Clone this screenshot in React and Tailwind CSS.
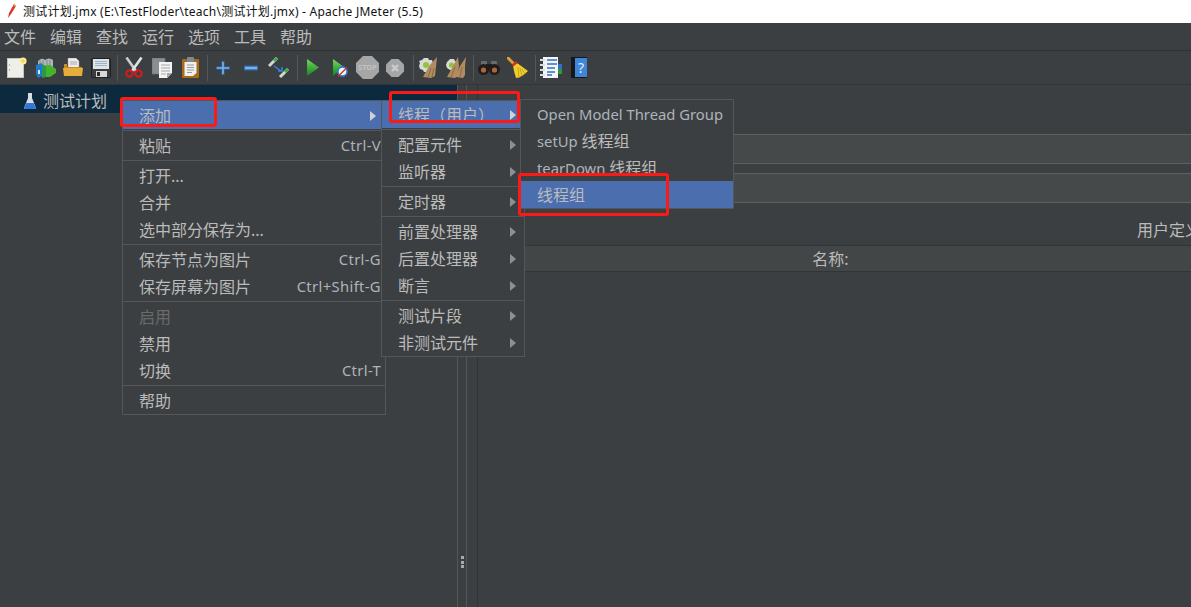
// JMeter window with the add > thread > thread group context menu open
const MENUS = ['文件', '编辑', '查找', '运行', '选项', '工具', '帮助'];

function Arrow({ light }) {
  return (
    <svg width="6" height="10" viewBox="0 0 6 10" className="shrink-0">
      <path d="M0 0 L6 5 L0 10 Z" fill={light ? '#cfd3d8' : '#8d9093'} />
    </svg>
  );
}

function Sep() {
  return (
    <div className="py-px">
      <div className="h-px bg-[#555657]" />
    </div>
  );
}

function Latin({ children }) {
  return <span className="text-[14.8px] text-[#adb4ba]">{children}</span>;
}

function Shortcut({ children }) {
  return <span className="text-[14.8px] tracking-[0.35px] text-[#adb4ba]">{children}</span>;
}

function Item({ label, shortcut, arrow, active, disabled, h = 'h-[27px]', pad = 'pr-[4px]' }) {
  return (
    <div className={`flex items-center justify-between pl-[16px] ${h} ${pad} ${active ? 'bg-[#4b6eaf]' : ''}`}>
      <span className={disabled ? 'text-[#6a6a6a]' : 'text-[#bbbbbb]'}>{label}</span>
      {shortcut && <Shortcut>{shortcut}</Shortcut>}
      {arrow && <Arrow light={active} />}
    </div>
  );
}

function ToolSep({ gap = 'ml-[4px] mr-[1px]' }) {
  return <div className={`h-[26px] w-px bg-[#555657] ${gap}`} />;
}

function Tool({ children, w = 'w-[28px]' }) {
  return <div className={`flex justify-center ${w}`}>{children}</div>;
}

function NewIcon() {
  return (
    <svg width="20" height="21" viewBox="0 0 20 21">
      <rect x="0.5" y="1.5" width="16" height="19" fill="#efefe9" stroke="#c4c4bc" />
      <circle cx="2.5" cy="8" r="0.7" fill="#9a9a94" />
      <circle cx="2.5" cy="13" r="0.7" fill="#9a9a94" />
      <circle cx="16" cy="4" r="3.6" fill="#f7efa0" />
      <circle cx="16" cy="4" r="1.8" fill="#f2d84a" />
    </svg>
  );
}
function TemplateIcon() {
  return (
    <svg width="21" height="22" viewBox="0 0 21 22">
      <path d="M3 4 Q7 0 10 3 Q14 0 18 3 L18 10 L3 10 Z" fill="#aeb6b9" />
      <path d="M5 3 V9 M8 3 V9 M12 3 V9 M15 3 V9" stroke="#808a8d" />
      <path d="M1 8 L7 6 V19 L3 21 L1 17 Z" fill="#1f78c8" />
      <path d="M7 7 L11 9 V20 L7 21 Z" fill="#2a9a48" />
      <path d="M11 8 H15 L21 12 V16 L15 20 H11 Z" fill="#45b32c" />
      <rect x="3" y="13" width="2" height="4" fill="#d5e6f5" />
    </svg>
  );
}
function OpenIcon() {
  return (
    <svg width="20" height="19" viewBox="0 0 20 19">
      <path d="M5 0 H13 L16 3 V10 H5 Z" fill="#ececec" stroke="#9a9a9a" strokeWidth="0.5" />
      <path d="M7 4 H14 M7 6 H14" stroke="#a8a8a8" />
      <path d="M1 6 H4 V9 H19 V17 Q19 18 18 18 H2 Q1 18 1 17 Z" fill="#c88d1e" />
      <path d="M0 10 H20 L19 18 H1 Z" fill="#e6ad3a" />
    </svg>
  );
}
function SaveIcon() {
  return (
    <svg width="20" height="20" viewBox="0 0 20 20">
      <rect x="0.5" y="0.5" width="19" height="19" rx="1" fill="#3a3d40" stroke="#1f2021" />
      <rect x="2" y="1" width="16" height="10" fill="#dde4ea" />
      <path d="M4 3.5 H16 M4 5.5 H16 M4 7.5 H16" stroke="#9db4c8" />
      <rect x="5" y="13" width="11" height="6" fill="#d8d8d8" />
      <rect x="6" y="14" width="3" height="4" fill="#2a2a2a" />
    </svg>
  );
}
function CutIcon() {
  return (
    <svg width="18" height="21" viewBox="0 0 18 21">
      <path d="M1.5 0.5 L11 14" stroke="#c8cdd0" strokeWidth="2.6" />
      <path d="M16.5 0.5 L7 14" stroke="#e0e3e5" strokeWidth="2.6" />
      <circle cx="4.5" cy="16.5" r="3.2" fill="none" stroke="#d01c1c" strokeWidth="2.2" />
      <circle cx="13.5" cy="16.5" r="3.2" fill="none" stroke="#d01c1c" strokeWidth="2.2" />
    </svg>
  );
}
function CopyIcon() {
  return (
    <svg width="21" height="20" viewBox="0 0 21 20">
      <rect x="0" y="0" width="13" height="16" fill="#8b8d8e" stroke="#6e7071" strokeWidth="0.6" />
      <path d="M7 4 H20 V15 L15 20 H7 Z" fill="#f3f3f3" />
      <path d="M20 15 H15 V20 Z" fill="#a9a9a9" />
      <path d="M9 7 H18 M9 10 H18 M9 13 H18 M9 16 H14" stroke="#a6a6a6" />
    </svg>
  );
}
function PasteIcon() {
  return (
    <svg width="17" height="21" viewBox="0 0 17 21">
      <rect x="0" y="2" width="17" height="19" rx="1" fill="#a8691a" />
      <path d="M2.5 5 H14.5 V16 L11 19 H2.5 Z" fill="#f0f0ee" />
      <rect x="5" y="0" width="7" height="5" rx="1" fill="#85888a" />
      <path d="M5 8 H12 M5 10.5 H12 M5 13 H12 M5 15.5 H10" stroke="#9b9b9b" />
    </svg>
  );
}
function PlusIcon() {
  return (
    <svg width="14" height="14" viewBox="0 0 14 14">
      <path d="M0 7 H14 M7 0 V14" stroke="#2f6bb0" strokeWidth="3" />
      <path d="M1 7 H13 M7 1 V13" stroke="#79b2ea" strokeWidth="1.6" />
    </svg>
  );
}
function MinusIcon() {
  return (
    <svg width="14" height="6" viewBox="0 0 14 6">
      <path d="M0 3 H14" stroke="#2f6bb0" strokeWidth="5" />
      <path d="M1 3 H13" stroke="#79b2ea" strokeWidth="2.4" />
    </svg>
  );
}
function ToggleIcon() {
  return (
    <svg width="22" height="21" viewBox="0 0 22 21">
      <path d="M1 9 L9 1" stroke="#d5d8d0" strokeWidth="3" />
      <path d="M6 4 L9 1" stroke="#3fae4a" strokeWidth="3" />
      <path d="M12 20 L20 12" stroke="#d5d8d0" strokeWidth="3" />
      <path d="M17 15 L20 12" stroke="#3fae4a" strokeWidth="3" />
      <path d="M6 9 L13 14 M10 14 H14 V10" stroke="#2f86e0" strokeWidth="1.5" fill="none" />
    </svg>
  );
}
function PlayIcon() {
  return (
    <svg width="12" height="17" viewBox="0 0 12 17">
      <defs>
        <linearGradient id="play" x1="0" y1="0" x2="0" y2="1">
          <stop offset="0" stopColor="#7ad35e" />
          <stop offset="1" stopColor="#0b8a1c" />
        </linearGradient>
      </defs>
      <path d="M0 0 L12 8.5 L0 17 Z" fill="url(#play)" />
    </svg>
  );
}
function PlayNoTimerIcon() {
  return (
    <svg width="15" height="18" viewBox="0 0 15 18">
      <path d="M0 0 L11 8 L0 17 Z" fill="url(#play)" />
      <circle cx="9.5" cy="12.5" r="4.6" fill="#f2f2f2" stroke="#2f78d0" strokeWidth="1.6" />
      <path d="M5 17.5 L14 8.5" stroke="#d62a2a" strokeWidth="1.3" />
    </svg>
  );
}
function StopIcon() {
  return (
    <svg width="23" height="23" viewBox="0 0 23 23">
      <path d="M7 0 H16 L23 7 V16 L16 23 H7 L0 16 V7 Z" fill="#a6a6a6" />
      <text x="11.5" y="14" textAnchor="middle" fontSize="7.5" fontWeight="700" fill="#c2c2c2">STOP</text>
    </svg>
  );
}
function ShutdownIcon() {
  return (
    <svg width="18" height="18" viewBox="0 0 18 18">
      <path d="M5.5 0 H12.5 L18 5.5 V12.5 L12.5 18 H5.5 L0 12.5 V5.5 Z" fill="#a6a6a6" />
      <path d="M6 6 L12 12 M12 6 L6 12" stroke="#cdcdcd" strokeWidth="2.4" />
    </svg>
  );
}
function ClearIcon() {
  return (
    <svg width="19" height="21" viewBox="0 0 19 21">
      <path d="M5 1 H9 L10 3 L13 3 L14 6 L13 8 L14 11 L11 13 L9 15 H5 L4 13 L1 12 L0 9 L1 6 L0 4 L3 3 Z" fill="#d9d9d6" />
      <circle cx="7" cy="8" r="3" fill="#8fc43c" />
      <path d="M18 0 L10 9 L4 20 L12 21 L16 19 L17 10 Z" fill="#b18c60" />
      <path d="M9 20 L12 11 M13 20 L15 11" stroke="#8a6a44" />
    </svg>
  );
}
function ClearAllIcon() {
  return (
    <svg width="20" height="21" viewBox="0 0 20 21">
      <path d="M4 2 H8 L9 4 L11 5 L10 8 L11 11 L8 13 H4 L1 11 L0 8 L1 5 Z" fill="#d9d9d6" />
      <circle cx="5.5" cy="8" r="2.6" fill="#8fc43c" />
      <path d="M12 0 L7 9 L1 20 L9 21 L12 19 L13 9 Z" fill="#b18c60" />
      <path d="M20 0 L14 9 L10 20 L17 21 L19 18 L19 9 Z" fill="#b18c60" />
      <path d="M5 20 L9 10 M14 20 L16 10" stroke="#8a6a44" />
    </svg>
  );
}
function BinocularsIcon() {
  return (
    <svg width="22" height="14" viewBox="0 0 22 14">
      <rect x="3" y="0" width="6" height="6" rx="1" fill="#6b6b6b" />
      <rect x="13" y="0" width="6" height="6" rx="1" fill="#6b6b6b" />
      <rect x="8" y="3" width="6" height="4" fill="#1d1d1d" />
      <circle cx="5.5" cy="8.5" r="5.5" fill="#201c1a" />
      <circle cx="16.5" cy="8.5" r="5.5" fill="#201c1a" />
      <circle cx="5.5" cy="9" r="2.6" fill="#a9683a" />
      <circle cx="16.5" cy="9" r="2.6" fill="#a9683a" />
    </svg>
  );
}
function BroomIcon() {
  return (
    <svg width="21" height="21" viewBox="0 0 21 21">
      <path d="M1 1 L7 7" stroke="#d9a035" strokeWidth="3" strokeLinecap="round" />
      <path d="M6 9 L10 6 L21 14 Q14 21 9 21 Q7 15 6 9 Z" fill="#efce2c" />
      <path d="M12 21 L11 10 M15 19 L13 11 M18 17 L15 12" stroke="#c9a31c" />
      <path d="M5.5 8.5 L10 5" stroke="#d32a2a" strokeWidth="2.4" />
    </svg>
  );
}
function TreeIcon() {
  return (
    <svg width="22" height="21" viewBox="0 0 22 21">
      <rect x="3" y="0" width="15" height="21" fill="#f5f5f5" />
      <path d="M7 3 H17 M7 7 H17 M7 11 H15 M7 15 H15 M7 18 H12" stroke="#2f6fd0" strokeWidth="1.3" />
      <path d="M0 3 H5 M0 8 H5 M0 13 H5 M0 18 H5" stroke="#dcdcdc" strokeWidth="2" />
      <rect x="18" y="7" width="4" height="5" fill="#2f6fd0" />
      <rect x="18" y="12" width="4" height="5" fill="#2e9a36" />
    </svg>
  );
}
function HelpIcon() {
  return (
    <svg width="16" height="21" viewBox="0 0 16 21">
      <rect x="0" y="0" width="16" height="21" fill="#14181c" />
      <rect x="4" y="1" width="12" height="19" fill="#3f86d8" />
      <text x="10" y="16" textAnchor="middle" fontSize="14" fill="#e4eefa">?</text>
    </svg>
  );
}

function Flask() {
  return (
    <svg width="14" height="18" viewBox="0 0 14 18">
      <path d="M5 1 H9 V6 L13 16 Q13 17 12 17 H2 Q1 17 1 16 L5 6 Z" fill="#d8dde2" />
      <path d="M3.4 11 H10.6 L13 16 Q13 17 12 17 H2 Q1 17 1 16 Z" fill="#2f78d8" />
    </svg>
  );
}

function RedBox({ className }) {
  return <div className={`absolute rounded-[3px] border-[3px] border-[#fb1a16] ${className}`} />;
}

export default function App() {
  return (
    <div className="relative flex h-[607px] w-[1191px] flex-col overflow-hidden bg-[#3c3f41] font-['Noto_Sans','Noto_Sans_CJK_SC',sans-serif] text-[16px] leading-none text-[#bbbbbb]">
      {/* title bar */}
      <div className="flex h-[23px] items-center bg-white pl-[6px] text-[12px] tracking-[0.23px] text-[#111111]">
        <svg width="10" height="15" viewBox="0 0 10 15" className="mr-[7px]">
          <path d="M8 0 L3 9 L2 14 L5 10 L10 2 Z" fill="#d8342c" />
          <path d="M8 0 L10 2 L9 3 L7 1 Z" fill="#e9a23a" />
        </svg>
        测试计划.jmx (E:\TestFloder\teach\测试计划.jmx) - Apache JMeter (5.5)
      </div>

      {/* menu bar */}
      <div className="flex h-[28px] items-center gap-[14px] border-b border-[#2f3234] pl-[4px] pt-[1px]">
        {MENUS.map((m) => (
          <span key={m}>{m}</span>
        ))}
      </div>

      {/* toolbar */}
      <div className="flex h-[34px] items-center border-b border-[#323537] pl-[3px]">
        <Tool><NewIcon /></Tool>
        <Tool><TemplateIcon /></Tool>
        <Tool><OpenIcon /></Tool>
        <Tool><SaveIcon /></Tool>
        <ToolSep gap="ml-[2px] mr-[2px]" />
        <Tool><CutIcon /></Tool>
        <Tool><CopyIcon /></Tool>
        <Tool><PasteIcon /></Tool>
        <ToolSep gap="ml-[3px] mr-[1px]" />
        <Tool><PlusIcon /></Tool>
        <Tool><MinusIcon /></Tool>
        <Tool><ToggleIcon /></Tool>
        <ToolSep />
        <Tool w="w-[27.5px]"><PlayIcon /></Tool>
        <Tool w="w-[27.5px]"><PlayNoTimerIcon /></Tool>
        <Tool w="w-[27.5px]"><StopIcon /></Tool>
        <Tool w="w-[27.5px]"><ShutdownIcon /></Tool>
        <ToolSep />
        <Tool w="w-[27px]"><ClearIcon /></Tool>
        <Tool w="w-[27px]"><ClearAllIcon /></Tool>
        <ToolSep />
        <Tool><BinocularsIcon /></Tool>
        <Tool><BroomIcon /></Tool>
        <ToolSep />
        <Tool><TreeIcon /></Tool>
        <Tool><HelpIcon /></Tool>
      </div>

      {/* body */}
      <div className="flex min-h-0 flex-1">
        <div className="w-[458px] border-r border-[#555657]">
          <div className="flex h-[28px] items-center gap-[6px] bg-[#0d293e] pl-[23px] pt-[4px]">
            <Flask />
            <span>测试计划</span>
          </div>
        </div>
        <div className="relative w-[9px] border-r border-[#555657]">
          <div className="absolute left-[3px] top-[471px] flex flex-col gap-[1.5px]">
            <div className="size-[3px] bg-[#a8a8a8]" />
            <div className="size-[3px] bg-[#a8a8a8]" />
            <div className="size-[3px] bg-[#a8a8a8]" />
          </div>
        </div>
        <div className="w-[11px] border-r border-[#323537]" />
        <div className="min-w-0 flex-1 overflow-hidden pt-[49px]">
          <div className="h-[30px] border-y border-[#5e6060] bg-[#45494a]" />
          <div className="mt-[9px] h-[30px] border-y border-[#5e6060] bg-[#45494a]" />
          <div className="flex h-[42px] items-end whitespace-nowrap pb-[7px] pl-[659px]">用户定义的变量</div>
          <div className="flex h-[27px] items-center justify-center border-y border-[#323537] bg-[#434647] pr-[8px]">
            名称:
          </div>
        </div>
      </div>

      {/* context menu */}
      <div className="absolute left-[122px] top-[100px] w-[264px] border border-[#555657] bg-[#3c3f41]">
        <Item label="添加" arrow active h="h-[28px]" pad="pr-[9px] pt-[1px]" />
        <Sep />
        <Item label="粘贴" shortcut="Ctrl-V" />
        <Sep />
        <Item label="打开..." />
        <Item label="合并" />
        <Item label="选中部分保存为..." />
        <Sep />
        <Item label="保存节点为图片" shortcut="Ctrl-G" />
        <Item label="保存屏幕为图片" shortcut="Ctrl+Shift-G" />
        <Sep />
        <Item label="启用" disabled />
        <Item label="禁用" />
        <Item label="切换" shortcut="Ctrl-T" />
        <Sep />
        <Item label="帮助" />
      </div>

      {/* add submenu */}
      <div className="absolute left-[381px] top-[100px] w-[144px] border border-[#555657] bg-[#3c3f41]">
        <Item label="线程（用户）" arrow active pad="pr-[8px]" />
        <Sep />
        <Item label="配置元件" arrow pad="pr-[8px]" />
        <Item label="监听器" arrow pad="pr-[8px]" />
        <Sep />
        <Item label="定时器" arrow pad="pr-[8px]" />
        <Sep />
        <Item label="前置处理器" arrow pad="pr-[8px]" />
        <Item label="后置处理器" arrow pad="pr-[8px]" />
        <Item label="断言" arrow pad="pr-[8px]" />
        <Sep />
        <Item label="测试片段" arrow pad="pr-[8px]" />
        <Item label="非测试元件" arrow pad="pr-[8px]" />
      </div>

      {/* thread submenu */}
      <div className="absolute left-[520px] top-[99px] w-[214px] border border-[#555657] bg-[#3c3f41]">
        <Item label={<Latin>Open Model Thread Group</Latin>} />
        <Item label={<><Latin>setUp </Latin>线程组</>} />
        <Item label={<><Latin>tearDown </Latin>线程组</>} />
        <Item label="线程组" active />
      </div>

      {/* annotation boxes */}
      <RedBox className="left-[120px] top-[97px] h-[30px] w-[97px]" />
      <RedBox className="left-[389px] top-[91px] h-[32px] w-[131px]" />
      <RedBox className="left-[518px] top-[173px] h-[43px] w-[151px]" />
    </div>
  );
}
